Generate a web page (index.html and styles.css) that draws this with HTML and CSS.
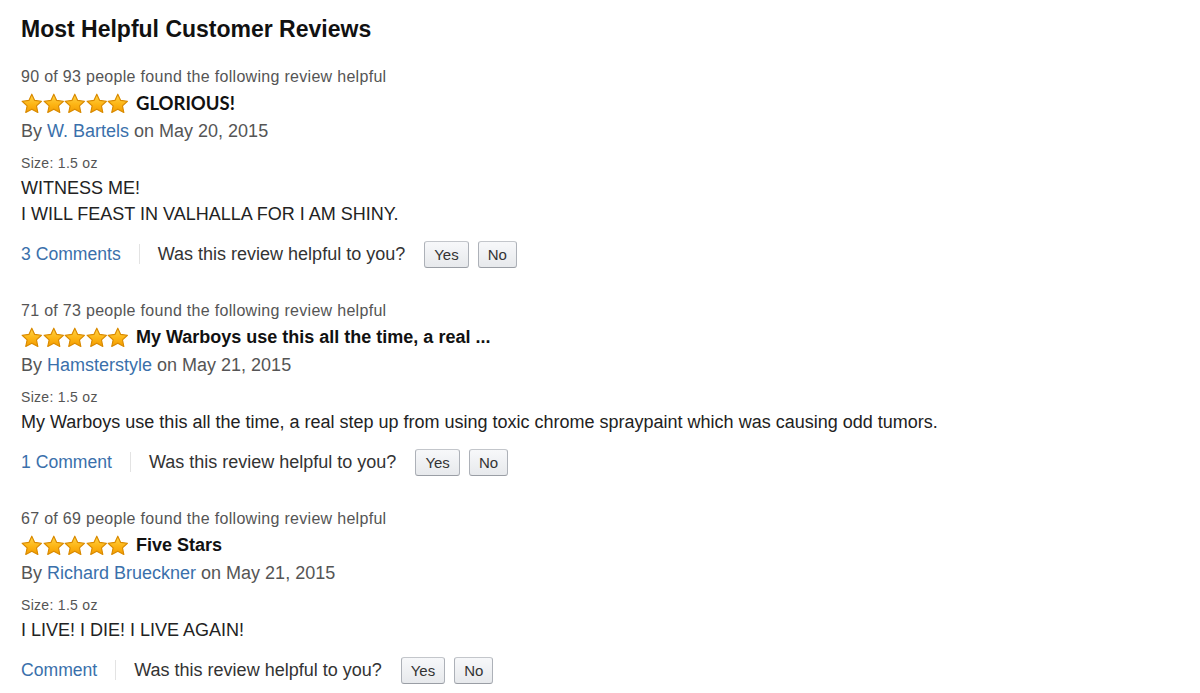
FILE: index.html
```html
<!DOCTYPE html>
<html lang="en">
<head>
    <meta charset="UTF-8">
    <meta name="viewport" content="width=device-width, initial-scale=1.0">
    <title>Most Helpful Customer Reviews</title>
    <link rel="stylesheet" href="styles.css">
</head>
<body>
    <svg width="0" height="0" class="defs">
        <defs>
            <linearGradient id="starFill" x1="0" y1="0" x2="0" y2="1">
                <stop offset="0" stop-color="#ffd54a"/>
                <stop offset="0.55" stop-color="#fdb515"/>
                <stop offset="1" stop-color="#f39c00"/>
            </linearGradient>
            <symbol id="star" viewBox="0 0 24 23">
                <path d="M12 1.2l3.2 6.9 7.5.9-5.5 5.1 1.5 7.4L12 17.8l-6.7 3.7 1.5-7.4L1.3 9l7.5-.9z" fill="url(#starFill)" stroke="#d98a00" stroke-width="1.3" stroke-linejoin="round"/>
            </symbol>
        </defs>
    </svg>

    <section class="reviews">
        <h2 class="reviews-title">Most Helpful Customer Reviews</h2>

        <div class="review">
            <p class="review-helpful">90 of 93 people found the following review helpful</p>
            <div class="review-head">
                <span class="stars">
                    <svg><use href="#star"/></svg><svg><use href="#star"/></svg><svg><use href="#star"/></svg><svg><use href="#star"/></svg><svg><use href="#star"/></svg>
                </span>
                <span class="review-name alt-font">GLORIOUS!</span>
            </div>
            <p class="review-by">By <a href="#">W. Bartels</a> on May 20, 2015</p>
            <p class="review-size">Size: 1.5 oz</p>
            <div class="review-text">
                <p>WITNESS ME!</p>
                <p>I WILL FEAST IN VALHALLA FOR I AM SHINY.</p>
            </div>
            <div class="review-actions">
                <a href="#">3 Comments</a>
                <span class="divider"></span>
                <span>Was this review helpful to you?</span>
                <button class="vote-button first">Yes</button>
                <button class="vote-button">No</button>
            </div>
        </div>

        <div class="review">
            <p class="review-helpful">71 of 73 people found the following review helpful</p>
            <div class="review-head">
                <span class="stars">
                    <svg><use href="#star"/></svg><svg><use href="#star"/></svg><svg><use href="#star"/></svg><svg><use href="#star"/></svg><svg><use href="#star"/></svg>
                </span>
                <span class="review-name">My Warboys use this all the time, a real ...</span>
            </div>
            <p class="review-by">By <a href="#">Hamsterstyle</a> on May 21, 2015</p>
            <p class="review-size">Size: 1.5 oz</p>
            <div class="review-text">
                <p>My Warboys use this all the time, a real step up from using toxic chrome spraypaint which was causing odd tumors.</p>
            </div>
            <div class="review-actions">
                <a href="#">1 Comment</a>
                <span class="divider"></span>
                <span>Was this review helpful to you?</span>
                <button class="vote-button first">Yes</button>
                <button class="vote-button">No</button>
            </div>
        </div>

        <div class="review">
            <p class="review-helpful">67 of 69 people found the following review helpful</p>
            <div class="review-head">
                <span class="stars">
                    <svg><use href="#star"/></svg><svg><use href="#star"/></svg><svg><use href="#star"/></svg><svg><use href="#star"/></svg><svg><use href="#star"/></svg>
                </span>
                <span class="review-name">Five Stars</span>
            </div>
            <p class="review-by">By <a href="#">Richard Brueckner</a> on May 21, 2015</p>
            <p class="review-size">Size: 1.5 oz</p>
            <div class="review-text">
                <p>I LIVE! I DIE! I LIVE AGAIN!</p>
            </div>
            <div class="review-actions">
                <a href="#">Comment</a>
                <span class="divider"></span>
                <span>Was this review helpful to you?</span>
                <button class="vote-button first">Yes</button>
                <button class="vote-button">No</button>
            </div>
        </div>
    </section>
</body>
</html>
```

FILE: styles.css
```css
/* Reset */
body, h2, p {
    margin: 0;
    padding: 0;
}

body {
    font-family: "Liberation Sans", Arial, sans-serif;
    color: #333;
    background-color: #fff;
}

.defs {
    position: absolute;
}

a {
    color: #3a70ab;
    text-decoration: none;
}

/* Section */
.reviews {
    padding: 16px 21px 0;
}

.reviews-title {
    font-size: 23px;
    line-height: 26px;
    font-weight: bold;
    color: #111;
}

/* Review block */
.review {
    margin-top: 32px;
}

.reviews-title + .review {
    margin-top: 24px;
}

.review-helpful {
    font-size: 16px;
    letter-spacing: 0.3px;
    line-height: 22px;
    color: #555;
}

.review-head {
    display: flex;
    align-items: center;
    height: 30px;
}

.stars {
    display: flex;
    margin-right: 7px;
}

.stars svg {
    width: 21.6px;
    height: 21px;
}

.review-name {
    font-size: 18px;
    font-weight: bold;
    color: #111;
}

.review-name.alt-font {
    font-family: Lato, sans-serif;
    font-size: 18.5px;
}

.review-by {
    font-size: 18px;
    line-height: 26px;
    color: #555;
}

.review-size {
    margin-top: 10px;
    font-size: 14px;
    letter-spacing: 0.3px;
    line-height: 18px;
    color: #555;
}

.review-text {
    margin-top: 3px;
    font-size: 18px;
    line-height: 26px;
    color: #222;
}

/* Actions row */
.review-actions {
    display: flex;
    align-items: center;
    margin-top: 13px;
    height: 28px;
    font-size: 18px;
    color: #333;
}

.review-actions a {
    font-size: 17.6px;
}

.divider {
    width: 1px;
    height: 20px;
    background-color: #e3e3e3;
    margin: 0 18px;
}

.vote-button {
    font-family: "Liberation Sans", Arial, sans-serif;
    font-size: 15px;
    color: #333;
    height: 27px;
    padding: 0 9px;
    margin-left: 9px;
    border: 1px solid #adb1b8;
    border-top-color: #c3c6cb;
    border-bottom-color: #9a9ea5;
    border-radius: 3px;
    background: linear-gradient(#f7f8fa, #e7e9ec);
}

.vote-button.first {
    margin-left: 19px;
}
```
